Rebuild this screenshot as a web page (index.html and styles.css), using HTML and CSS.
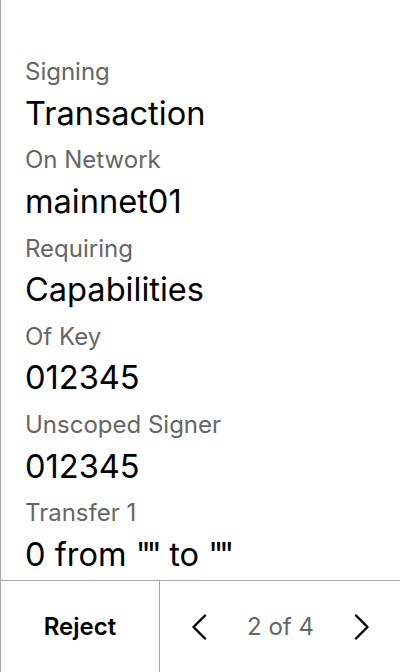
FILE: index.html
```html
<!DOCTYPE html>
<html lang="en">
<head>
<meta charset="utf-8">
<link rel="stylesheet" href="styles.css">
</head>
<body>
<div class="screen">
  <div class="details">
    <div class="item"><div class="label">Signing</div><div class="value">Transaction</div></div>
    <div class="item"><div class="label">On Network</div><div class="value">mainnet01</div></div>
    <div class="item"><div class="label">Requiring</div><div class="value">Capabilities</div></div>
    <div class="item"><div class="label">Of Key</div><div class="value">012345</div></div>
    <div class="item"><div class="label">Unscoped Signer</div><div class="value">012345</div></div>
    <div class="item"><div class="label">Transfer 1</div><div class="value">0 from <span class="q">""</span> to <span class="q">""</span></div></div>
  </div>
  <div class="footer">
    <div class="reject">Reject</div>
    <div class="pager">
      <svg class="chev" width="16" height="26" viewBox="0 0 16 26"><path d="M14 1.5 L2.5 13 L14 24.5" fill="none" stroke="#000" stroke-width="2.4" stroke-linecap="round" stroke-linejoin="round"/></svg>
      <span class="count">2 of 4</span>
      <svg class="chev" width="16" height="26" viewBox="0 0 16 26"><path d="M2 1.5 L13.5 13 L2 24.5" fill="none" stroke="#000" stroke-width="2.4" stroke-linecap="round" stroke-linejoin="round"/></svg>
    </div>
  </div>
</div>
</body>
</html>
```
FILE: styles.css
```css
html, body {
  margin: 0;
  padding: 0;
  background: #fff;
}
body {
  font-family: Inter, "Noto Sans", sans-serif;
  color: #000;
}
.screen {
  width: 399px;
  height: 672px;
  border-left: 1px solid #a8a8a8;
  display: flex;
  flex-direction: column;
}
.details {
  flex: 1;
  padding: 57px 0 0 24px;
  overflow: hidden;
}
.item {
  margin-bottom: 12.8px;
}
.label {
  font-size: 24px;
  line-height: 29px;
  color: #666;
}
.value {
  font-size: 32.6px;
  line-height: 39px;
  margin-top: 7.5px;
  color: #000;
}
.q {
  letter-spacing: -4.5px;
  margin-right: 3px;
}
.footer {
  height: 91px;
  border-top: 1px solid #a8a8a8;
  display: grid;
  grid-template-columns: 159px 1fr;
}
.reject {
  border-right: 1px solid #a8a8a8;
  display: flex;
  align-items: center;
  justify-content: center;
  font-size: 24px;
  font-weight: 600;
}
.pager {
  display: flex;
  align-items: center;
  justify-content: space-between;
  padding: 0 30px 0 31px;
}
.count {
  font-size: 24px;
  color: #666;
}
.chev {
  display: block;
}
```
